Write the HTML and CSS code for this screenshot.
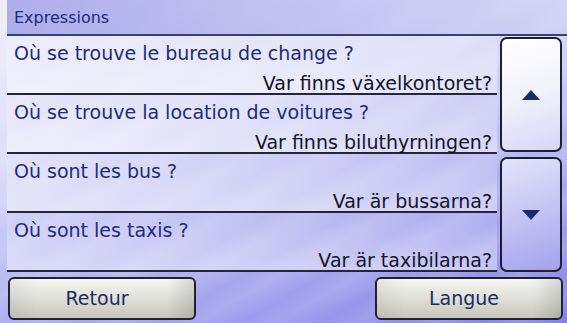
FILE: index.html
```html
<!DOCTYPE html>
<html>
<head>
<meta charset="utf-8">
<link rel="stylesheet" href="styles.css">
</head>
<body>
<div class="screen">
  <div class="header">Expressions</div>
  <div class="main">
    <div class="list">
      <div class="row"><div class="fr">Où se trouve le bureau de change ?</div><div class="sv">Var finns växelkontoret?</div></div>
      <div class="row"><div class="fr">Où se trouve la location de voitures ?</div><div class="sv">Var finns biluthyrningen?</div></div>
      <div class="row"><div class="fr">Où sont les bus ?</div><div class="sv">Var är bussarna?</div></div>
      <div class="row"><div class="fr">Où sont les taxis ?</div><div class="sv">Var är taxibilarna?</div></div>
    </div>
    <div class="scroll">
      <div class="sbtn up"><svg width="18" height="10" viewBox="0 0 18 10"><polygon points="9,0 18,10 0,10" fill="#1a2a6a"/></svg></div>
      <div class="sbtn down"><svg width="18" height="10" viewBox="0 0 18 10"><polygon points="0,0 18,0 9,10" fill="#1a2a6a"/></svg></div>
    </div>
  </div>
  <div class="footer">
    <div class="btn">Retour</div>
    <div class="btn">Langue</div>
  </div>
</div>
</body>
</html>
```
FILE: styles.css
```css
html, body {
  margin: 0;
  padding: 0;
}
body {
  width: 567px;
  height: 323px;
  overflow: hidden;
  font-family: "DejaVu Sans", Verdana, sans-serif;
  background:
    repeating-linear-gradient(150deg, rgba(255,255,255,0) 0px, rgba(255,255,255,0.12) 18px, rgba(255,255,255,0) 40px),
    linear-gradient(165deg, #eeeefc 0%, #dcdcf8 35%, #aaaaf0 70%, #8282e6 100%);
}
.screen {
  height: 323px;
  padding-left: 7px;
  padding-right: 4px;
  display: flex;
  flex-direction: column;
}
.header {
  height: 36px;
  box-sizing: border-box;
  padding: 9px 0 0 7px;
  font-size: 16px;
  line-height: 18px;
  color: #1c2c78;
  border-bottom: 2px solid #3a4068;
  background: linear-gradient(to right, rgba(120,120,225,0.55), rgba(150,150,230,0.15));
  margin-right: -4px;
}
.main {
  display: flex;
  gap: 3px;
  height: 236px;
}
.list {
  width: 490px;
  display: flex;
  flex-direction: column;
}
.row {
  height: 59px;
  box-sizing: border-box;
  padding: 6px 5px 0 7px;
  border-bottom: 2px solid #24243a;
  font-size: 19px;
  line-height: 22px;
  background: linear-gradient(to bottom, rgba(255,255,255,0.05), rgba(255,255,255,0.45));
}
.fr {
  color: #1c2c78;
  white-space: nowrap;
}
.sv {
  color: #14142a;
  text-align: right;
  margin-top: 8px;
  white-space: nowrap;
}
.scroll {
  width: 62px;
  display: flex;
  flex-direction: column;
  gap: 5px;
  padding-top: 1px;
}
.sbtn {
  flex: 1;
  box-sizing: border-box;
  border: 2px solid #1e1e34;
  border-radius: 7px;
  display: flex;
  align-items: center;
  justify-content: center;
}
.sbtn.up {
  background: linear-gradient(160deg, #ffffff 0%, #f2f2fc 50%, #d6d6f6 100%);
}
.sbtn.down {
  background: linear-gradient(160deg, #e4e4fa 0%, #c4c4f4 50%, #a2a2ee 100%);
}
.footer {
  flex: 1;
  display: flex;
  justify-content: space-between;
  align-items: center;
  padding: 1px 0 0 1px;
}
.btn {
  width: 188px;
  height: 43px;
  box-sizing: border-box;
  border: 2px solid #22222e;
  border-radius: 6px;
  padding-right: 10px;
  display: flex;
  align-items: center;
  justify-content: center;
  font-size: 19px;
  color: #1e2c5a;
  background:
    linear-gradient(to right, rgba(0,0,0,0.06), rgba(255,255,255,0) 15%, rgba(255,255,255,0) 85%, rgba(0,0,0,0.12)),
    linear-gradient(to bottom, #f6f6f2 0%, #e2e2dc 45%, #c6c6be 100%);
}
```
